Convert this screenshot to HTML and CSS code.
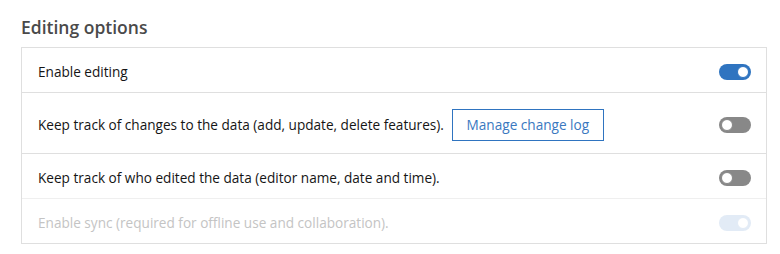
FILE: index.html
```html
<!DOCTYPE html>
<html lang="en">
<head>
    <meta charset="UTF-8">
    <title>Editing options</title>
    <link rel="stylesheet" href="styles.css">
</head>
<body>
    <section class="panel">
        <h2 class="panel-title">Editing options</h2>
        <div class="option-list">
            <div class="option-row">
                <span class="option-label">Enable editing</span>
                <span class="toggle toggle-on"><span class="knob"></span></span>
            </div>
            <div class="option-row option-row-tall">
                <span class="option-label">Keep track of changes to the data (add, update, delete features).</span>
                <button class="link-btn">Manage change log</button>
                <span class="toggle"><span class="knob"></span></span>
            </div>
            <div class="option-row">
                <span class="option-label">Keep track of who edited the data (editor name, date and time).</span>
                <span class="toggle"><span class="knob"></span></span>
            </div>
            <div class="option-row option-row-disabled">
                <span class="option-label">Enable sync (required for offline use and collaboration).</span>
                <span class="toggle toggle-on"><span class="knob"></span></span>
            </div>
        </div>
    </section>
</body>
</html>
```

FILE: styles.css
```css
body {
    margin: 0;
    background-color: #ffffff;
    font-family: 'Open Sans', 'Noto Sans', sans-serif;
    color: #151515;
}

.panel {
    padding: 16px 13px 10px 21px;
}

.panel-title {
    margin: 0 0 9px 0;
    font-size: 17.5px;
    font-weight: 600;
    color: #4a4a4a;
    line-height: 22px;
}

.option-list {
    border: 1px solid #dfdfdf;
}

.option-row {
    display: flex;
    align-items: center;
    height: 45px;
    padding: 3px 15px 0 16px;
    box-sizing: border-box;
    border-top: 1px solid #dfdfdf;
    font-size: 13.6px;
}

.option-row:first-child {
    border-top: none;
    height: 44px;
}

.option-row-tall {
    height: 61px;
}

.option-row-disabled {
    border-top-color: #efefef;
    color: #c4c4c4;
}

.option-label {
    flex: 0 0 auto;
}

.link-btn {
    margin-left: 8px;
    width: 152px;
    height: 32px;
    border: 1px solid #2f74c0;
    background: #ffffff;
    color: #3a78bf;
    font-family: inherit;
    font-size: 13.6px;
    padding: 0;
}

.toggle {
    margin-left: auto;
    position: relative;
    width: 32px;
    height: 16px;
    border-radius: 8px;
    background-color: #888888;
    box-sizing: border-box;
}

.toggle .knob {
    position: absolute;
    top: 2px;
    left: 2px;
    width: 12px;
    height: 12px;
    border-radius: 50%;
    background-color: #ffffff;
    box-sizing: border-box;
    border: 1px solid #888888;
}

.toggle-on {
    background-color: #2f74c0;
}

.toggle-on .knob {
    left: 18px;
    border-color: #2f74c0;
}

.option-row-disabled .toggle-on {
    background-color: #e2ebf6;
}

.option-row-disabled .toggle-on .knob {
    border-color: #e2ebf6;
}
```
